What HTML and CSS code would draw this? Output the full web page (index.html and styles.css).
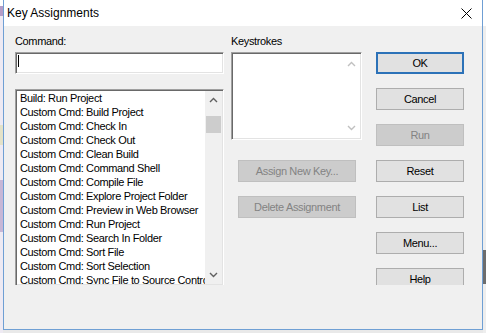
FILE: index.html
```html
<!DOCTYPE html>
<html lang="en">
<head>
    <meta charset="UTF-8">
    <title>Key Assignments</title>
    <link rel="stylesheet" href="styles.css">
</head>
<body>
    <div class="screen">
        <div class="edge-left"></div>

        <div class="window">
            <div class="titlebar">
                <span class="title">Key Assignments</span>
                <svg class="close" width="11" height="11" viewBox="0 0 11 11">
                    <path d="M0.5 0.5 L10.5 10.5 M10.5 0.5 L0.5 10.5" stroke="#000" stroke-width="1" fill="none"/>
                </svg>
            </div>

            <div class="client">
                <div class="col col-command">
                    <div class="label">Command:</div>
                    <div class="textbox"><span class="caret"></span></div>
                    <div class="listbox">
                        <ul class="items">
                            <li>Build: Run Project</li>
                            <li>Custom Cmd: Build Project</li>
                            <li>Custom Cmd: Check In</li>
                            <li>Custom Cmd: Check Out</li>
                            <li>Custom Cmd: Clean Build</li>
                            <li>Custom Cmd: Command Shell</li>
                            <li>Custom Cmd: Compile File</li>
                            <li>Custom Cmd: Explore Project Folder</li>
                            <li>Custom Cmd: Preview in Web Browser</li>
                            <li>Custom Cmd: Run Project</li>
                            <li>Custom Cmd: Search In Folder</li>
                            <li>Custom Cmd: Sort File</li>
                            <li>Custom Cmd: Sort Selection</li>
                            <li>Custom Cmd: Sync File to Source Control</li>
                        </ul>
                        <div class="vscroll">
                            <div class="arrow">
                                <svg width="9" height="6" viewBox="0 0 9 6"><polyline points="1,5 4.5,1.5 8,5" /></svg>
                            </div>
                            <div class="thumb"></div>
                            <div class="track"></div>
                            <div class="arrow">
                                <svg width="9" height="6" viewBox="0 0 9 6"><polyline points="1,1 4.5,4.5 8,1" /></svg>
                            </div>
                        </div>
                    </div>
                </div>

                <div class="col col-keys">
                    <div class="label">Keystrokes</div>
                    <div class="keybox">
                        <div class="vscroll disabled">
                            <div class="arrow">
                                <svg width="9" height="6" viewBox="0 0 9 6"><polyline points="1,5 4.5,1.5 8,5" /></svg>
                            </div>
                            <div class="track"></div>
                            <div class="arrow">
                                <svg width="9" height="6" viewBox="0 0 9 6"><polyline points="1,1 4.5,4.5 8,1" /></svg>
                            </div>
                        </div>
                    </div>
                    <div class="key-actions">
                        <button class="btn wide" disabled>Assign New Key...</button>
                        <button class="btn wide" disabled>Delete Assignment</button>
                    </div>
                </div>

                <div class="col col-buttons">
                    <button class="btn default">OK</button>
                    <button class="btn">Cancel</button>
                    <button class="btn" disabled>Run</button>
                    <button class="btn">Reset</button>
                    <button class="btn">List</button>
                    <button class="btn">Menu...</button>
                    <button class="btn">Help</button>
                </div>
            </div>

            <div class="footer"></div>
        </div>

        <div class="edge-right"></div>
    </div>
</body>
</html>
```

FILE: styles.css
```css
* {
    margin: 0;
    padding: 0;
    box-sizing: border-box;
}

body {
    background-color: #e9e9e9;
    font-family: "Liberation Sans", Arial, sans-serif;
    font-size: 11px;
    letter-spacing: -0.35px;
    color: #000;
    overflow: hidden;
}

.screen {
    display: flex;
    width: 486px;
    height: 333px;
}

.edge-left {
    width: 3px;
    background: linear-gradient(to bottom, #ffffff 0, #ffffff 6px, #b49cc8 6px, #b49cc8 16px,
        #eeeaf3 16px, #eeeaf3 125px, #e4e2c8 125px, #e4e2c8 145px, #eeeaf3 145px,
        #eeeaf3 180px, #c7b6d6 180px, #c7b6d6 232px, #eeeaf3 232px);
}

.edge-right {
    width: 3px;
    background: linear-gradient(to bottom, #ffffff 0, #ffffff 26px, #eeeeee 26px, #eeeeee 250px,
        #6d6d6d 250px, #6d6d6d 284px, #eeeeee 284px);
}

.window {
    width: 480px;
    height: 330px;
    display: flex;
    flex-direction: column;
    border: 1px solid #6f9fd4;
    border-top: none;
    background-color: #f0f0f0;
}

.titlebar {
    height: 26px;
    display: flex;
    align-items: center;
    justify-content: space-between;
    padding: 0 10px 0 3px;
    background-color: #fff;
}

.title {
    font-size: 12px;
    letter-spacing: 0;
}

.client {
    height: 259px;
    overflow: hidden;
    display: flex;
    padding: 9px 0 0 11px;
}

.label {
    line-height: 13px;
    height: 13px;
}

.col-command {
    width: 209px;
}

.col-keys {
    width: 131px;
    margin-left: 7px;
}

.col-buttons {
    width: 88px;
    margin-left: 14px;
    padding-top: 17px;
    display: flex;
    flex-direction: column;
    gap: 14px;
}

/* sunken controls */
.textbox, .listbox, .keybox {
    background-color: #fff;
    border: 1px solid;
    border-color: #a0a0a0 #ffffff #ffffff #a0a0a0;
    box-shadow: inset 1px 1px 0 #696969, inset -1px -1px 0 #e3e3e3;
}

.textbox {
    margin-top: 4px;
    height: 22px;
    padding: 2px 0 0 2px;
}

.caret {
    display: block;
    width: 1px;
    height: 12px;
    background-color: #000;
}

.listbox {
    margin-top: 15px;
    height: 197px;
    display: flex;
    padding: 1px 1px 1px 2px;
}

.items {
    flex: 1;
    list-style: none;
    overflow: hidden;
    white-space: nowrap;
}

.items li {
    height: 14px;
    line-height: 14px;
    padding-left: 2px;
}

.vscroll {
    width: 17px;
    display: flex;
    flex-direction: column;
    background-color: #f0f0f0;
}

.vscroll .arrow {
    height: 18px;
    display: flex;
    align-items: center;
    justify-content: center;
}

.vscroll polyline {
    fill: none;
    stroke: #606060;
    stroke-width: 1.4;
}

.vscroll .thumb {
    height: 17px;
    margin: 7px 1px 0;
    background-color: #cdcdcd;
}

.vscroll .track {
    flex: 1;
}

.vscroll.disabled {
    background-color: transparent;
}

.vscroll.disabled polyline {
    stroke: #c0c0c0;
}

.keybox {
    margin-top: 4px;
    height: 88px;
    display: flex;
    justify-content: flex-end;
    padding: 2px 1px 2px 2px;
}

.key-actions {
    margin-top: 20px;
    padding-left: 7px;
    display: flex;
    flex-direction: column;
    gap: 14px;
}

.btn {
    display: block;
    width: 88px;
    height: 22px;
    flex-shrink: 0;
    background-color: #e1e1e1;
    border: 1px solid #adadad;
    font-family: inherit;
    font-size: 11px;
    letter-spacing: -0.35px;
    color: #000;
    text-align: center;
}

.btn.wide {
    width: 118px;
}

.btn.default {
    border: 2px solid #2c72b8;
}

.btn:disabled {
    background-color: #cccccc;
    border-color: #bfbfbf;
    color: #838383;
}

.footer {
    flex: 1;
    background-color: #f0f0f0;
}
```
